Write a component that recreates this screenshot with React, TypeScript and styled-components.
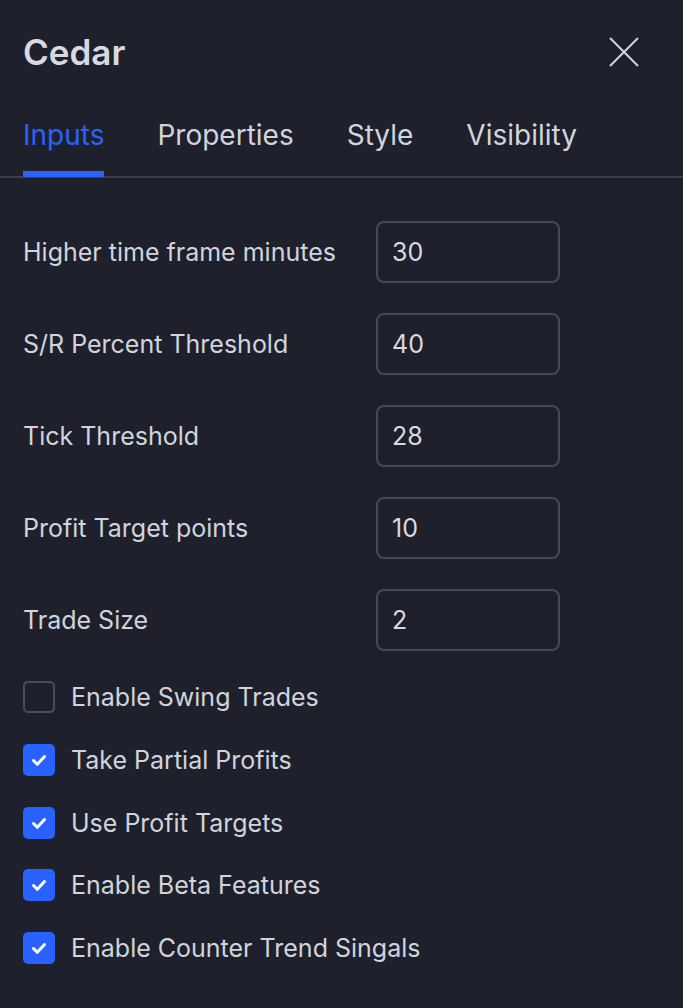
import React from "react";
import styled, { createGlobalStyle } from "styled-components";

const Global = createGlobalStyle`
  html, body { margin: 0; padding: 0; background: #1e212c; }
  body { font-family: Inter, "Noto Sans", sans-serif; color: #d1d4dc; }
  * { box-sizing: border-box; }
`;

const Panel = styled.div`
  width: 683px;
  min-height: 1008px;
  background: #1e212c;
  display: flex;
  flex-direction: column;
`;

const Header = styled.div`
  display: flex;
  align-items: center;
  justify-content: space-between;
  height: 104px;
  padding: 0 44px 0 23px;
`;

const Title = styled.h1`
  margin: 0;
  font-size: 35px;
  font-weight: 600;
  color: #d8dae0;
`;

const CloseButton = styled.button`
  background: none;
  border: none;
  padding: 0;
  width: 30px;
  height: 30px;
  display: flex;
  align-items: center;
  justify-content: center;
  cursor: pointer;
`;

const Tabs = styled.div`
  display: flex;
  gap: 53px;
  padding: 0 23px;
  border-bottom: 2px solid #3a3d48;
  height: 74px;
`;

const Tab = styled.div<{ $active?: boolean }>`
  position: relative;
  font-size: 28px;
  font-weight: 400;
  color: ${(p) => (p.$active ? "#2962ff" : "#d1d4dc")};
  padding-top: 14px;
  height: 100%;
  &::after {
    content: "";
    display: ${(p) => (p.$active ? "block" : "none")};
    position: absolute;
    left: 0;
    right: 0;
    bottom: -1px;
    height: 6px;
    background: #2962ff;
  }
`;

const Form = styled.div`
  display: flex;
  flex-direction: column;
  padding: 43px 23px 0;
  gap: 30px;
`;

const Row = styled.div`
  display: flex;
  align-items: center;
  height: 62px;
`;

const Label = styled.div`
  width: 353px;
  font-size: 25px;
  color: #d1d4dc;
`;

const Field = styled.div`
  width: 184px;
  height: 62px;
  border: 2px solid #474a55;
  border-radius: 8px;
  display: flex;
  align-items: center;
  padding-left: 14px;
  font-size: 25px;
  color: #d8dae0;
`;

const Checks = styled.div`
  display: flex;
  flex-direction: column;
  gap: 30.75px;
  padding: 30px 23px 0;
`;

const CheckRow = styled.div`
  display: flex;
  align-items: center;
  gap: 16px;
  height: 32px;
`;

const Box = styled.div<{ $checked?: boolean }>`
  width: 32px;
  height: 32px;
  border-radius: 5px;
  background: ${(p) => (p.$checked ? "#2962ff" : "transparent")};
  border: ${(p) => (p.$checked ? "none" : "2px solid #4a4d58")};
  display: flex;
  align-items: center;
  justify-content: center;
`;

const CheckLabel = styled.div`
  font-size: 25px;
  color: #d1d4dc;
`;

const fields = [
  ["Higher time frame minutes", "30"],
  ["S/R Percent Threshold", "40"],
  ["Tick Threshold", "28"],
  ["Profit Target points", "10"],
  ["Trade Size", "2"],
];

const checks: [string, boolean][] = [
  ["Enable Swing Trades", false],
  ["Take Partial Profits", true],
  ["Use Profit Targets", true],
  ["Enable Beta Features", true],
  ["Enable Counter Trend Singals", true],
];

const Check = () => (
  <svg width="20" height="20" viewBox="0 0 20 20" fill="none">
    <path d="M4.5 10.5l3.8 3.8 7.2-7.8" stroke="#fff" strokeWidth="3" strokeLinecap="round" strokeLinejoin="round" />
  </svg>
);

export default function App() {
  return (
    <Panel>
      <Global />
      <Header>
        <Title>Cedar</Title>
        <CloseButton aria-label="Close">
          <svg width="30" height="30" viewBox="0 0 30 30">
            <path d="M1 1l28 28M29 1L1 29" stroke="#d1d4dc" strokeWidth="2" />
          </svg>
        </CloseButton>
      </Header>
      <Tabs>
        <Tab $active>Inputs</Tab>
        <Tab>Properties</Tab>
        <Tab>Style</Tab>
        <Tab>Visibility</Tab>
      </Tabs>
      <Form>
        {fields.map(([l, v]) => (
          <Row key={l}>
            <Label>{l}</Label>
            <Field>{v}</Field>
          </Row>
        ))}
      </Form>
      <Checks>
        {checks.map(([l, c]) => (
          <CheckRow key={l}>
            <Box $checked={c}>{c && <Check />}</Box>
            <CheckLabel>{l}</CheckLabel>
          </CheckRow>
        ))}
      </Checks>
    </Panel>
  );
}
